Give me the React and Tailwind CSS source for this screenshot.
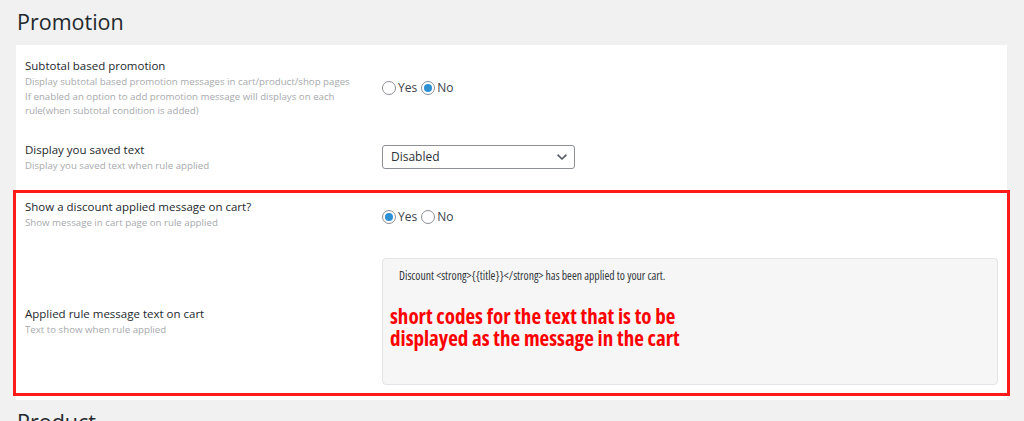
import React from "react";

const font = { fontFamily: '"Open Sans", "Noto Sans", Arial, sans-serif' };

function Radio({ checked }) {
  return (
    <span className="inline-flex h-[14px] w-[14px] items-center justify-center rounded-full border border-[#8c8f94] bg-white">
      {checked && <span className="h-[8px] w-[8px] rounded-full bg-[#2f8fd3]" />}
    </span>
  );
}

function RadioPair({ yes }) {
  return (
    <div className="flex items-center text-[12px] text-[#3c434a]">
      <Radio checked={yes} />
      <span className="ml-[2px] mr-[4px]">Yes</span>
      <Radio checked={!yes} />
      <span className="ml-[2px]">No</span>
    </div>
  );
}

function Label({ title, lines }) {
  return (
    <div className="w-[366px] shrink-0 pl-[9px]">
      <div className="text-[11.5px] leading-[16px] text-[#23282d]">{title}</div>
      <div className="mt-[1px] text-[9.7px] leading-[14.5px] text-[#a7aaad]">
        {lines.map((l, i) => (
          <div key={i}>{l}</div>
        ))}
      </div>
    </div>
  );
}

export default function App() {
  return (
    <div className="h-[421px] w-[1024px] overflow-hidden bg-[#f1f1f1]" style={font}>
      <div className="pl-[16px] pr-[17px]">
        <h2 className="pt-[6px] pb-[7px] pl-[1px] text-[21.5px] leading-[32px] text-[#23282d]">Promotion</h2>
        <div className="bg-white pb-[2px]">
          {/* row 1 */}
          <div className="flex h-[85px] items-start pt-[13px]">
            <Label
              title="Subtotal based promotion"
              lines={[
                "Display subtotal based promotion messages in cart/product/shop pages",
                "If enabled an option to add promotion message will displays on each",
                "rule(when subtotal condition is added)",
              ]}
            />
            <div className="pt-[21px]">
              <RadioPair yes={false} />
            </div>
          </div>
          {/* row 2 */}
          <div className="flex h-[61px] items-start pt-[12px]">
            <Label title="Display you saved text" lines={["Display you saved text when rule applied"]} />
            <div className="pt-[3px]">
              <div className="flex h-[24px] w-[193px] items-center justify-between rounded-[3px] border border-[#8c8f94] bg-white pl-[8px] pr-[6px] text-[12px] text-[#2c3338]">
                <span>Disabled</span>
                <svg width="12" height="12" viewBox="0 0 12 12" fill="none">
                  <path d="M2 4.2 L6 8 L10 4.2" stroke="#50575e" strokeWidth="1.6" strokeLinecap="round" strokeLinejoin="round" />
                </svg>
              </div>
            </div>
          </div>
          {/* highlighted rows */}
          <div className="relative">
            <div className="pointer-events-none absolute -left-[3px] -right-[3px] -top-[1px] bottom-[2px] border-[3px] border-[#ff1a1a]" />
            <div className="flex h-[55px] items-start pt-[8px]">
              <Label title="Show a discount applied message on cart?" lines={["Show message in cart page on rule applied"]} />
              <div className="pt-[9px]">
                <RadioPair yes={true} />
              </div>
            </div>
            <div className="flex h-[152px] items-start pt-[12px]">
              <div className="pt-[48px]">
                <Label title="Applied rule message text on cart" lines={["Text to show when rule applied"]} />
              </div>
              <div className="h-[127px] w-[616px] rounded-[4px] border border-[#e2e4e7] bg-[#f6f6f6] pl-[16px] pt-[8px]">
                <div className="text-[11.7px] leading-[16px] text-[#32373c] font-stretch-[85%]">
                  Discount &lt;strong&gt;{"{{title}}"}&lt;/strong&gt; has been applied to your cart.
                </div>
                <div className="mt-[22px] -ml-[9px] text-[21px] font-bold leading-[22px] text-[#ff0000] font-stretch-[75%]">
                  short codes for the text that is to be
                  <br />
                  displayed as the message in the cart
                </div>
              </div>
            </div>
          </div>
        </div>
        <h2 className="pt-[6px] pl-[1px] text-[21.5px] leading-[32px] text-[#23282d]">Product</h2>
      </div>
    </div>
  );
}
